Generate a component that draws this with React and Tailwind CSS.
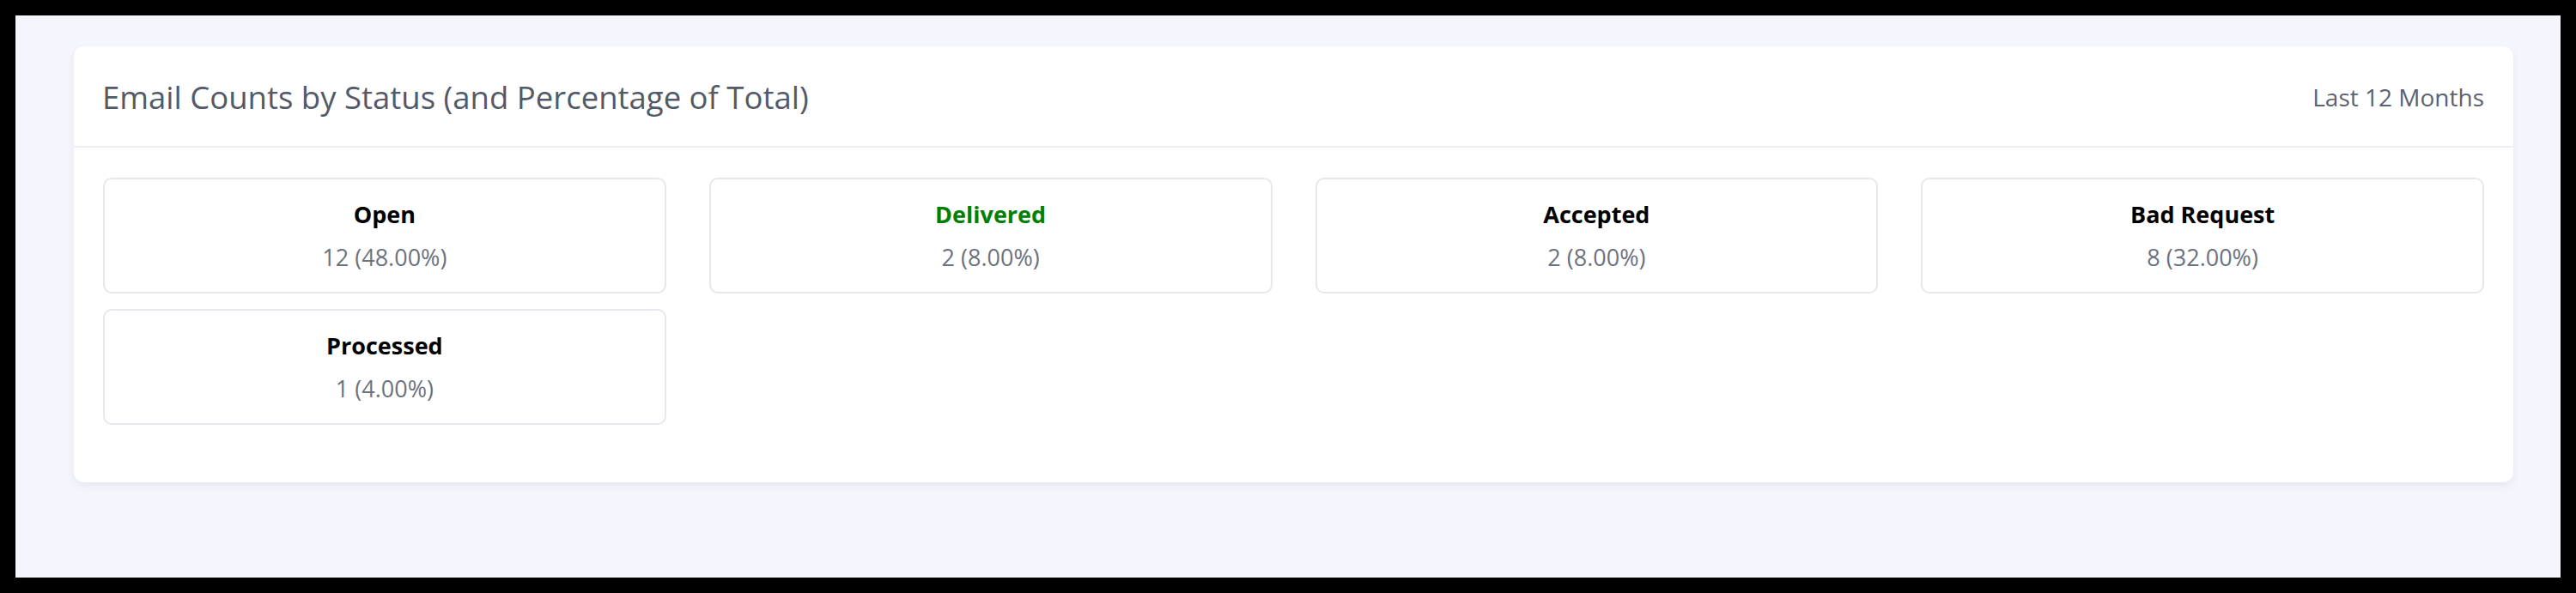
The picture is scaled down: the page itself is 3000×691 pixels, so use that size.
import React from 'react';

const stats = [
    { label: 'Open', count: 12, pct: '48.00%' },
    { label: 'Delivered', count: 2, pct: '8.00%', color: 'text-[#008000]' },
    { label: 'Accepted', count: 2, pct: '8.00%' },
    { label: 'Bad Request', count: 8, pct: '32.00%' },
    { label: 'Processed', count: 1, pct: '4.00%' },
];

function StatBox({ label, count, pct, color }) {
    return (
        <div className="h-[135px] bg-white border-2 border-[#e6e8ee] rounded-[10px] flex flex-col items-center justify-center">
            <p className={`text-[27px] font-bold leading-[40px] ${color || 'text-black'}`}>{label}</p>
            <p className="text-[27px] leading-[40px] mt-[10px] text-[#6b7280]">
                {count} ({pct})
            </p>
        </div>
    );
}

export default function App() {
    return (
        <div className="w-[3000px] h-[691px] bg-black p-[18px]" style={{ fontFamily: '"Open Sans", "Noto Sans", sans-serif' }}>
            <div className="h-full bg-[#f5f6fd] pl-[68px] pr-[55px] pt-[36px]">
                <div className="bg-white rounded-[12px] shadow-[0_4px_10px_rgba(40,50,90,0.08)]">
                    {/* cabecera */}
                    <div className="h-[118px] flex items-center justify-between pl-[33px] pr-[34px] pt-[2px] border-b-2 border-[#eceef3]">
                        <h2 className="text-[36.5px] text-[#525a68]">Email Counts by Status (and Percentage of Total)</h2>
                        <span className="text-[28px] text-[#5b6270]">Last 12 Months</span>
                    </div>

                    {/* tarjetas */}
                    <div className="grid grid-cols-4 gap-x-[50px] gap-y-[18px] px-[34px] pt-[35px] pb-[67px]">
                        {stats.map(s => (
                            <StatBox key={s.label} {...s} />
                        ))}
                    </div>
                </div>
            </div>
        </div>
    );
}
